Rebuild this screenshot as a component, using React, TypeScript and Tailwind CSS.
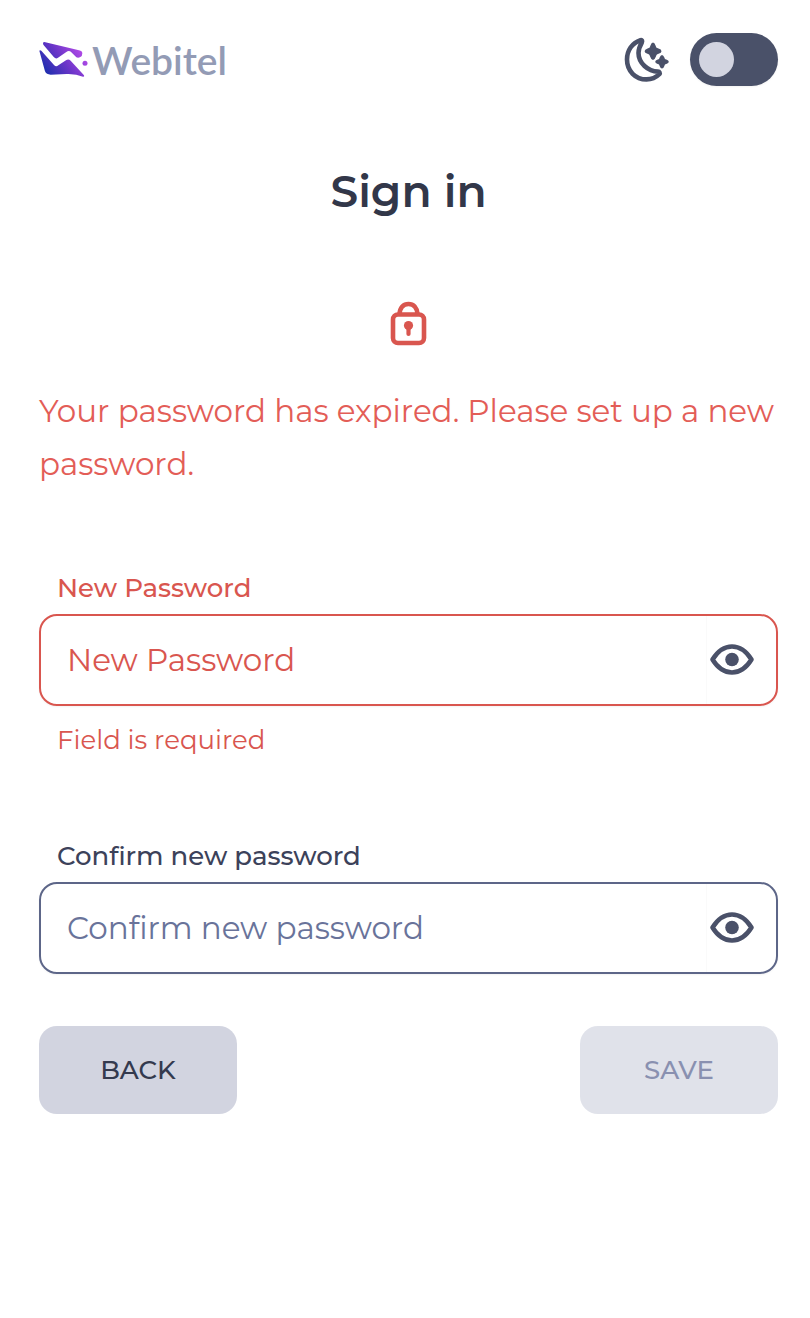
import { useState } from 'react';

function Logo() {
  return (
    <a href="#" className="flex items-center gap-0.5 text-[#939bb5]">
      <svg viewBox="27 21 153 111" className="h-[37px] w-[51px]" aria-hidden="true">
        <defs>
          <linearGradient id="logo" gradientUnits="userSpaceOnUse" x1="45" y1="115" x2="150" y2="40">
            <stop offset="0" stopColor="#1e2fae" />
            <stop offset="0.5" stopColor="#6a35c8" />
            <stop offset="1" stopColor="#b44be8" />
          </linearGradient>
        </defs>
        <g fill="url(#logo)">
          <path d="M43 24 L147 49 Q157 51 157 58 Q157 67 151 69 Q145 73 139 70 L124 55 Q117 48 109 54 L84 71 Q78 76 72 70 L40 32 Q37 24 43 24Z" />
          <path d="M28 50 Q30 47 34 50 L72 93 Q78 100 85 94 L108 79 Q115 74 122 80 L162 124 Q164 129 159 128 Q138 119 110 120 L62 122 Q49 122 45 112Z" />
          <circle cx="165" cy="88" r="7.5" />
        </g>
      </svg>
      <span className="font-['Lato',sans-serif] text-[39px] leading-[50px] font-semibold">Webitel</span>
    </a>
  );
}

function MoonIcon() {
  return (
    <svg viewBox="0 0 48 48" className="size-12 text-[#4a5169]" aria-hidden="true">
      <path
        d="M18.500 4.200C10 7 5 14.500 5 23.500C5 35 13.500 43.400 24.500 43.400C29.500 43.400 34 41.500 37.300 38.200C38.300 37 37.500 35.600 36 35.600C26 35.500 16.500 27 16.500 17C16.500 12.500 17.800 10 19.800 6.500C20.500 5 20 3.800 18.500 4.200Z"
        fill="none"
        stroke="currentColor"
        strokeWidth="4.600"
        strokeLinejoin="round"
      />
      <g fill="currentColor" stroke="currentColor" strokeWidth="2" strokeLinejoin="round">
        <path d="M31 7.500C32.500 7.500 32.700 11.500 34 12.500C35.200 13.700 38.500 13.500 38.500 15.200C38.500 16.800 35.200 16.700 34 18C32.800 19.200 32.600 23 31 23C29.400 23 29.200 19.200 28 18C26.800 16.700 23.600 16.800 23.600 15.200C23.600 13.600 26.800 13.700 28 12.500C29.300 11.500 29.500 7.500 31 7.500Z" />
        <path d="M40 20C41.200 20 41.400 22.800 42.300 23.700C43.200 24.600 45.800 24.600 45.800 25.800C45.800 27 43.200 27 42.300 27.900C41.400 28.800 41.200 31.500 40 31.500C38.800 31.500 38.600 28.800 37.700 27.900C36.800 27 34.200 27 34.200 25.800C34.200 24.600 36.800 24.600 37.700 23.700C38.600 22.800 38.800 20 40 20Z" />
      </g>
    </svg>
  );
}

function LockIcon() {
  return (
    <svg viewBox="0 0 48 48" className="size-12 text-[#d9564f]" fill="none" stroke="currentColor" strokeWidth="4.600" aria-hidden="true">
      <rect x="8" y="14.500" width="31" height="28.500" rx="5" />
      <path d="M14.500 14C15 7.500 18.500 4 23.500 4C28.500 4 32 7.500 32.500 14" />
      <circle cx="23.500" cy="25.500" r="4.600" fill="currentColor" stroke="none" />
      <path d="M23.500 27V34" strokeWidth="4.200" strokeLinecap="round" />
    </svg>
  );
}

function EyeIcon() {
  return (
    <svg viewBox="0 0 48 48" className="size-12 text-[#4a5169]" aria-hidden="true">
      <path
        d="M4.500 23.500C9.500 15.500 16.500 10.500 24 10.500C31.500 10.500 38.500 15.500 43.500 23.500C38.500 31.500 31.500 36.500 24 36.500C16.500 36.500 9.500 31.500 4.500 23.500Z"
        fill="none"
        stroke="currentColor"
        strokeWidth="4.600"
        strokeLinejoin="round"
      />
      <circle cx="24" cy="23.500" r="6.800" fill="currentColor" />
    </svg>
  );
}

type FieldProps = {
  id: string;
  label: string;
  error?: string;
};

function PasswordField({ id, label, error }: FieldProps) {
  const [visible, setVisible] = useState(false);

  return (
    <div>
      <label
        htmlFor={id}
        className={`block px-[18px] pb-2 text-[26px] leading-9 font-medium ${error ? 'text-[#d9564f]' : 'text-[#3c425a]'}`}
      >
        {label}
      </label>
      <div
        className={`flex h-[92px] overflow-hidden rounded-[18px] border-2 shadow-xs ${error ? 'border-[#d9564f]' : 'border-[#5d6688]'}`}
      >
        <input
          id={id}
          type={visible ? 'text' : 'password'}
          placeholder={label}
          aria-invalid={!!error}
          className={`min-w-0 flex-1 px-[26px] text-[31px] outline-none ${error ? 'placeholder:text-[#d9564f]' : 'placeholder:text-[#69739a]'}`}
        />
        <button
          type="button"
          aria-label="Show password"
          onClick={() => setVisible(!visible)}
          className="flex w-[70px] items-center border-l border-[#fafafa] pl-px"
        >
          <EyeIcon />
        </button>
      </div>
      {error && <p className="px-[18px] pt-4 text-[26px] leading-9 text-[#d9564f]">{error}</p>}
    </div>
  );
}

export default function App() {
  const [dark, setDark] = useState(false);

  return (
    <main className="min-h-screen bg-white pt-[33px] pr-8 pb-8 pl-[39px] font-['Montserrat','Inter',sans-serif]">
      <header className="flex items-center justify-between">
        <Logo />
        <label className="flex items-center gap-5">
          <MoonIcon />
          <input
            type="checkbox"
            role="switch"
            aria-label="Dark theme"
            checked={dark}
            onChange={() => setDark(!dark)}
            className="peer sr-only"
          />
          <span className="flex h-[53px] w-[88px] items-center rounded-full bg-[#4a5169] px-[9px] shadow-xs peer-checked:justify-end">
            <span className="size-[35px] rounded-full bg-[#d2d4e0]" />
          </span>
        </label>
      </header>

      <h1 className="pt-[77px] text-center text-[44px] leading-[56px] font-semibold text-[#323749]">Sign in</h1>

      <div className="flex justify-center pt-[81px]">
        <LockIcon />
      </div>
      <p className="pt-[37px] text-[31px] leading-[53px] text-[#e35d57]">
        Your password has expired. Please set up a new password.
      </p>

      <form className="pt-[79px]" onSubmit={(e) => e.preventDefault()}>
        <div className="flex flex-col gap-20">
          <PasswordField id="new-password" label="New Password" error="Field is required" />
          <PasswordField id="confirm-password" label="Confirm new password" />
        </div>
        <div className="flex justify-between pt-[52px] text-[26px] font-medium">
          <button type="button" className="h-[88px] w-[198px] rounded-[18px] bg-[#d2d4e0] text-[#343a4e] uppercase">
            Back
          </button>
          <button type="submit" disabled className="h-[88px] w-[198px] rounded-[18px] bg-[#e0e2ea] text-[#8990b0] uppercase">
            Save
          </button>
        </div>
      </form>
    </main>
  );
}
